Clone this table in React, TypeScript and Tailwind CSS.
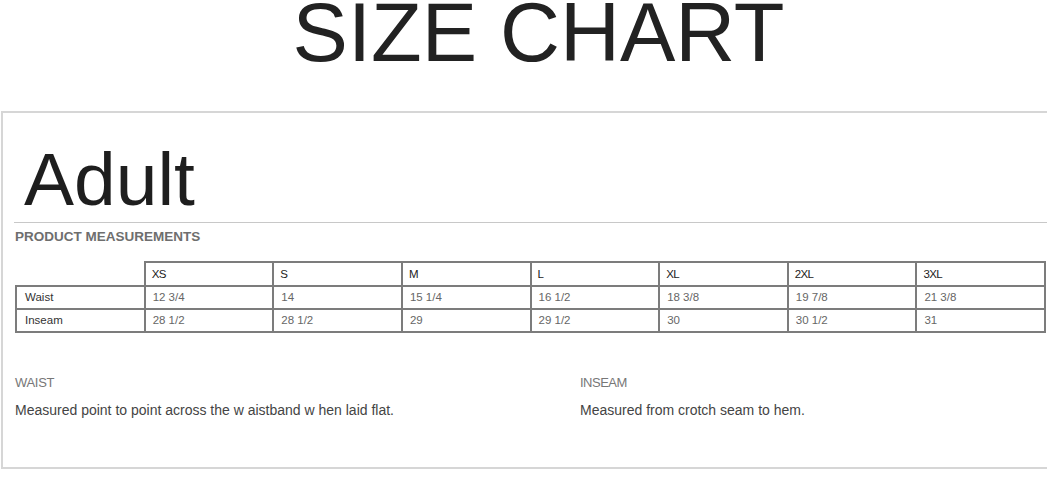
const sizes = ['XS', 'S', 'M', 'L', 'XL', '2XL', '3XL'];

const rows = [
  { label: 'Waist', values: ['12 3/4', '14', '15 1/4', '16 1/2', '18 3/8', '19 7/8', '21 3/8'] },
  { label: 'Inseam', values: ['28 1/2', '28 1/2', '29', '29 1/2', '30', '30 1/2', '31'] },
];

export default function App() {
  return (
    <div className="w-[1047px] h-[482px] overflow-hidden bg-white font-['Liberation_Sans',Arial,sans-serif]">
      {/* heading */}
      <div className="h-[111px] flex justify-center pl-[30px] pt-[2px]">
        <h1 className="text-[83px] leading-[62px] text-[#222]">SIZE CHART</h1>
      </div>

      <div className="ml-[1px] w-[1080px] h-[358px] border-t-2 border-l-2 border-b-2 border-[#d6d6d6]">
        <div className="pt-[29px] pl-[21px]">
          <h2 className="text-[75px] leading-[74px] text-[#1e1e1e]">Adult</h2>
        </div>
        <div className="ml-[11px] mt-[6px] border-t border-[#c8c8c8]" />
        <div className="pl-[12px] pt-[6px] text-[13.5px] leading-[16px] font-bold text-[#6e6e6e]">
          PRODUCT MEASUREMENTS
        </div>

        <table className="ml-[12px] mt-[16px] w-[1031px] table-fixed border-collapse text-[11.5px] leading-[17px]">
          <thead>
            <tr className="h-[24px]">
              <th className="border-0 p-0" />
              {sizes.map((s) => (
                <th
                  key={s}
                  className="border-2 border-[#7c7c7c] pl-[6px] text-left font-normal text-[#222] tracking-[-0.6px]"
                >
                  {s}
                </th>
              ))}
            </tr>
          </thead>
          <tbody>
            {rows.map((r) => (
              <tr key={r.label} className="h-[23px]">
                <td className="border-2 border-[#7c7c7c] pl-[8px] text-[#333]">{r.label}</td>
                {r.values.map((v, i) => (
                  <td key={i} className="border-2 border-[#7c7c7c] pl-[7px] text-[#666]">
                    {v}
                  </td>
                ))}
              </tr>
            ))}
          </tbody>
        </table>

        <div className="mt-[42px] flex text-[14px] leading-[16px]">
          <div className="w-[577px] pl-[12px]">
            <div className="text-[13px] text-[#777] tracking-[-0.3px]">WAIST</div>
            <div className="mt-[11px] text-[#444]">
              Measured point to point across the w aistband w hen laid flat.
            </div>
          </div>
          <div>
            <div className="text-[13px] text-[#777] tracking-[-0.5px]">INSEAM</div>
            <div className="mt-[11px] text-[#444]">Measured from crotch seam to hem.</div>
          </div>
        </div>
      </div>
    </div>
  );
}
